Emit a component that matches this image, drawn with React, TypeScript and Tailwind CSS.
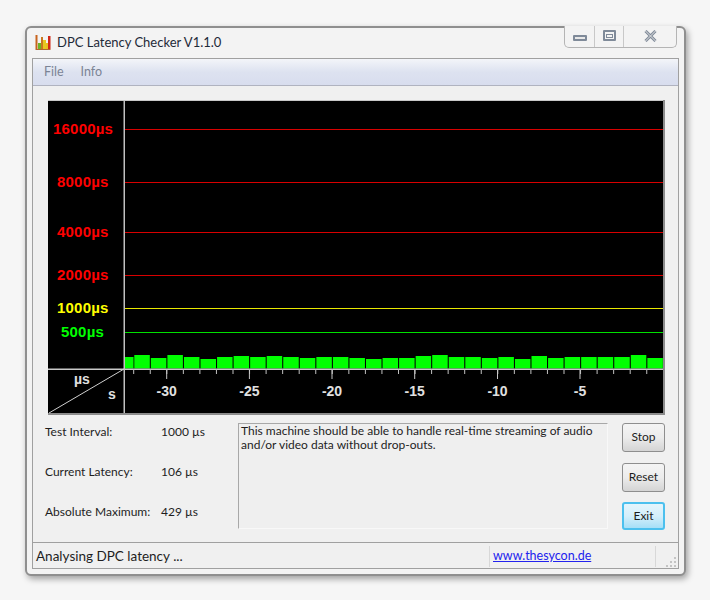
import React from 'react'

const lines = [
  { y: 129, color: '#d80000', text: '#ff0000', label: '16000µs', x: 53 },
  { y: 182, color: '#d80000', text: '#ff0000', label: '8000µs', x: 57 },
  { y: 232, color: '#d80000', text: '#ff0000', label: '4000µs', x: 57 },
  { y: 275, color: '#d80000', text: '#ff0000', label: '2000µs', x: 57 },
  { y: 308, color: '#e8e800', text: '#ffff00', label: '1000µs', x: 57 },
  { y: 332, color: '#00e000', text: '#00ff00', label: '500µs', x: 61 },
]

// bar tops in page pixels, left to right
const barTops = [
  355, 358, 355, 357, 359, 357, 356, 357, 356, 357, 358, 357, 357, 358, 359, 358,
  358, 356, 355, 357, 357, 358, 357, 359, 356, 358, 357, 357, 357, 357, 355, 358,
]

const majors = [
  { x: 166.7, label: '-30' },
  { x: 249.4, label: '-25' },
  { x: 332, label: '-20' },
  { x: 414.7, label: '-15' },
  { x: 497.5, label: '-10' },
  { x: 580, label: '-5' },
]

const Chart = () => {
  const ticks = Array.from({ length: 32 }, (_, i) => 133.7 + i * 16.55)
  return (
    <svg viewBox="48 100 617 316" className="block w-[617px] h-[316px]">
      <rect x="48" y="100" width="617" height="316" fill="#f0f0f0" />
      <rect x="48" y="101" width="615" height="312" fill="#000" />
      <line x1="48" y1="100.5" x2="664" y2="100.5" stroke="#c8c8c8" />
      <rect x="663" y="100" width="2" height="315" fill="#8c8c8c" />
      <rect x="48" y="413" width="617" height="2" fill="#8c8c8c" />
      {lines.map(l => (
        <g key={l.label}>
          <line x1="124" y1={l.y + 0.5} x2="663" y2={l.y + 0.5} stroke={l.color} />
          <text x={l.x} y={l.y + 5} fill={l.text} fontSize="15" fontWeight="700" letterSpacing="0.2" fontFamily="'Liberation Sans', sans-serif">
            {l.label}
          </text>
        </g>
      ))}
      <rect x="124" y="357" width="9.5" height="11.5" fill="#00ff00" />
      {barTops.map((top, i) => (
        <rect key={i} x={134.3 + i * 16.55} y={top} width="15.5" height={368.5 - top} fill="#00ff00" />
      ))}
      <rect x="123.5" y="101" width="1.5" height="268" fill="#c0c0c0" />
      <rect x="48" y="368.5" width="615" height="1.5" fill="#c8c8c8" />
      <rect x="123.5" y="369" width="1.5" height="44" fill="#c0c0c0" />
      <line x1="49" y1="413" x2="124" y2="369" stroke="#d0d0d0" />
      {ticks.map(x => (
        <line key={x} x1={x} y1="369" x2={x} y2="374" stroke="#c0c0c0" />
      ))}
      {majors.map(m => (
        <g key={m.label}>
          <line x1={m.x} y1="369" x2={m.x} y2="379" stroke="#c8c8c8" />
          <text x={m.x} y="396" fill="#e0e0e0" fontSize="14" fontWeight="700" textAnchor="middle" fontFamily="'Liberation Sans', sans-serif">
            {m.label}
          </text>
        </g>
      ))}
      <text x="74" y="384" fill="#e0e0e0" fontSize="14" fontWeight="700" fontFamily="'Liberation Sans', sans-serif">µs</text>
      <text x="108" y="399" fill="#e0e0e0" fontSize="14" fontWeight="700" fontFamily="'Liberation Sans', sans-serif">s</text>
    </svg>
  )
}

const AppIcon = () => (
  <svg width="16" height="16" viewBox="0 0 16 16" className="block shrink-0">
    <rect x="0.5" y="1" width="2" height="14" fill="#c8641e" />
    <rect x="3" y="9" width="3" height="6" fill="#6cb428" />
    <rect x="6" y="3" width="2" height="12" fill="#c8781e" />
    <rect x="8" y="6" width="3" height="9" fill="#e8c820" />
    <rect x="11" y="9" width="2" height="6" fill="#e8c020" />
    <rect x="13" y="2" width="2.5" height="13" fill="#d02818" />
    <rect x="0.5" y="15" width="15" height="1" fill="#b06830" />
  </svg>
)

const WindowControls = () => (
  <div className="flex h-[22px] w-[113px] rounded-b-[5px] border border-t-0 border-[#b4b4b4] bg-[#f3f3f3] shrink-0">
    <div className="w-[30px] border-r border-[#c8c8c8] flex justify-center pt-[9px]">
      <div className="w-[14px] h-[6px] rounded-[1px] border-2 border-[#7f8a99] bg-[#e8e8e8]" />
    </div>
    <div className="w-[29px] border-r border-[#c8c8c8] flex justify-center pt-[4px]">
      <div className="w-[13px] h-[11px] rounded-[1px] border-2 border-[#7f8a99] flex items-center justify-center">
        <div className="w-[7px] h-[4px] border border-[#7f8a99]" />
      </div>
    </div>
    <div className="flex-1 flex justify-center pt-[4px]">
      <svg width="13" height="12" viewBox="0 0 13 12">
        <path d="M1.5 1 L11.5 11 M11.5 1 L1.5 11" stroke="#7f8a99" strokeWidth="3" />
        <path d="M1.5 1 L11.5 11 M11.5 1 L1.5 11" stroke="#e4e4e4" strokeWidth="1" />
      </svg>
    </div>
  </div>
)

const Btn = ({ label, active }: { label: string; active?: boolean }) => (
  <div
    className={
      active
        ? 'w-[43px] h-[28px] rounded-[3px] border-2 border-[#4cc0ee] bg-gradient-to-b from-[#e4f5fc] via-[#d4effb] to-[#a6dff7] flex items-center justify-center pb-[1px] text-[12px] text-[#1c1c1c]'
        : 'w-[43px] h-[29px] rounded-[3px] border border-[#8e8e8e] bg-gradient-to-b from-[#f4f4f4] via-[#ececec] to-[#d4d4d4] flex items-center justify-center pb-[1px] text-[12px] text-[#1c1c1c]'
    }
  >
    {label}
  </div>
)

export default function App() {
  return (
    <div className="w-[710px] h-[600px] bg-[#f6f6f6] pt-[26px] pl-[25px] font-['Lato','Noto_Sans',sans-serif] overflow-hidden">
      <div className="w-[661px] h-[550px] rounded-[6px] border-2 border-[#8f8f8f] bg-[#f3f3f3] shadow-[2px_3px_6px_rgba(0,0,0,0.35)] flex flex-col px-[5px] pb-[5px]">
        <div className="h-[30px] flex items-start shrink-0">
          <div className="flex items-center gap-[6px] pl-[3px] pt-[6px]">
            <AppIcon />
            <span className="text-[13px] leading-[16px] text-[#1e2a38]">DPC Latency Checker V1.1.0</span>
          </div>
          <div className="ml-auto mr-[2px] mt-[-2px]">
            <WindowControls />
          </div>
        </div>
        <div className="flex-1 flex flex-col border border-[#a0a0a0] bg-[#f0f0f0] min-h-0">
          <div className="h-[27px] shrink-0 border-b border-[#b0b3c0] bg-gradient-to-b from-[#f3f5f9] via-[#dde2f0] to-[#d8ddee] flex items-center gap-[17px] pl-[11px] pt-[1px] text-[12.5px] text-[#7b8495]">
            <span>File</span>
            <span>Info</span>
          </div>
          <div className="flex-1 flex flex-col min-h-0">
            <div className="pt-[14px] pl-[15px]">
              <Chart />
            </div>
            <div className="flex mt-[7px] pl-[12px]">
              <div className="w-[193px] flex flex-col pt-[1px] text-[12px] leading-[16px] text-[#1e1e1e]">
                <div className="flex h-[16px] mb-[24px]">
                  <span className="w-[116px]">Test Interval:</span>
                  <span>1000 µs</span>
                </div>
                <div className="flex h-[16px] mb-[24px]">
                  <span className="w-[116px]">Current Latency:</span>
                  <span>106 µs</span>
                </div>
                <div className="flex h-[16px]">
                  <span className="w-[116px]">Absolute Maximum:</span>
                  <span>429 µs</span>
                </div>
              </div>
              <div className="w-[370px] h-[106px] border border-[#a8a8a8] border-r-[#f8f8f8] border-b-[#f8f8f8] bg-[#efefef] px-[2px] text-[12px] leading-[14px] text-[#1e1e1e]">
                This machine should be able to handle real-time streaming of audio and/or video data without drop-outs.
              </div>
              <div className="ml-[14px] flex flex-col gap-[11px]">
                <Btn label="Stop" />
                <Btn label="Reset" />
                <div className="mt-[-1px]">
                  <Btn label="Exit" active />
                </div>
              </div>
            </div>
          </div>
          <div className="h-[26px] shrink-0 border-t border-[#a0a0a0] bg-[#f0f0f0] flex items-center pt-[1px] text-[13.5px] text-[#1e1e1e]">
            <span className="w-[456px] pl-[3px]">Analysing DPC latency ...</span>
            <div className="w-[166px] h-[21px] border-l border-[#d8d8d8] pl-[3px] flex items-center">
              <span className="text-[12.5px] text-[#2222ee] underline">www.thesycon.de</span>
            </div>
            <div className="flex-1 h-[21px] border-l border-[#d8d8d8] flex items-end justify-end pr-[1px]">
              <svg width="11" height="11" viewBox="0 0 11 11">
                <path d="M8 1h2v2H8zM4 5h2v2H4zM8 5h2v2H8zM0 9h2v2H0zM4 9h2v2H4zM8 9h2v2H8z" fill="#c4c4c4" />
              </svg>
            </div>
          </div>
        </div>
      </div>
    </div>
  )
}
